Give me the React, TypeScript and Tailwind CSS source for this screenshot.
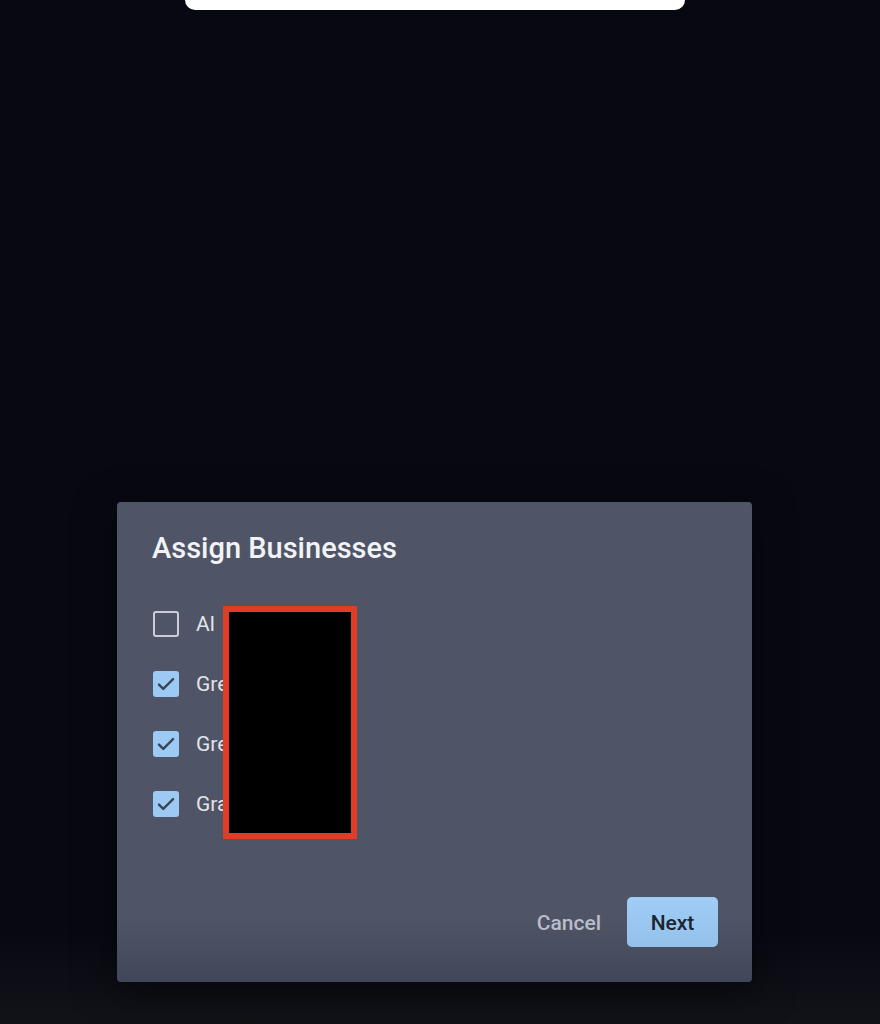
import React from "react";

function Check({ checked }: { checked: boolean }) {
  if (!checked) {
    return <div className="w-[26px] h-[26px] rounded-[3px] border-2 border-[#c9cdd8] shrink-0" />;
  }
  return (
    <div className="w-[26px] h-[26px] rounded-[3px] bg-[#9ccaf4] shrink-0 flex items-center justify-center">
      <svg width="26" height="26" viewBox="0 0 24 24" fill="none" stroke="#3b4658" strokeWidth="2.2" strokeLinecap="round" strokeLinejoin="round">
        <path d="M5.5 12.5l4 4L18.5 7.5" />
      </svg>
    </div>
  );
}

export default function App() {
  const rows = [
    { label: "Al", checked: false },
    { label: "Gre", checked: true },
    { label: "Gre", checked: true },
    { label: "Gra", checked: true },
  ];
  return (
    <div
      className="relative w-full h-[1024px] overflow-hidden bg-[linear-gradient(to_bottom,#070812_0%,#070812_91%,#121318_100%)]"
      style={{ fontFamily: "Roboto, 'Liberation Sans', sans-serif" }}
    >
      <div className="ml-[185px] w-[500px] h-[10px] bg-white rounded-b-[11px]" />
      <div className="ml-[117px] mt-[492px] w-[635px] h-[480px] rounded-[4px] bg-[linear-gradient(to_bottom,#4f5566_0%,#4f5566_86%,#42465a_100%)] shadow-[0_10px_40px_rgba(0,0,0,0.5)] flex flex-col pt-[28px] pl-[35px] pr-[34px] pb-[35px]">
        <div className="text-[29px] leading-[36px] font-medium text-[#f2f3f6]">Assign Businesses</div>
        <div className="mt-[28px] flex flex-col">
          {rows.map((r, i) => (
            <div key={i} className="h-[60px] flex items-center gap-[17px] pl-[1px]">
              <Check checked={r.checked} />
              <span className="text-[21px] text-[#e3e5ea] pt-[2px]">{r.label}</span>
            </div>
          ))}
        </div>
        <div className="mt-auto flex items-center justify-end gap-[26px]">
          <span className="text-[21px] font-medium text-[#b9bdc8] pt-[3px]">Cancel</span>
          <div className="w-[91px] h-[50px] rounded-[5px] bg-[linear-gradient(to_bottom,#a0cdf6,#93c1ea)] flex items-center justify-center text-[21px] font-medium text-[#1c2431] pt-[3px]">
            Next
          </div>
        </div>
      </div>
      <div className="absolute left-[223px] top-[606px] w-[134px] h-[233px] border-[6px] border-[#e23c24] bg-black" />
    </div>
  );
}
